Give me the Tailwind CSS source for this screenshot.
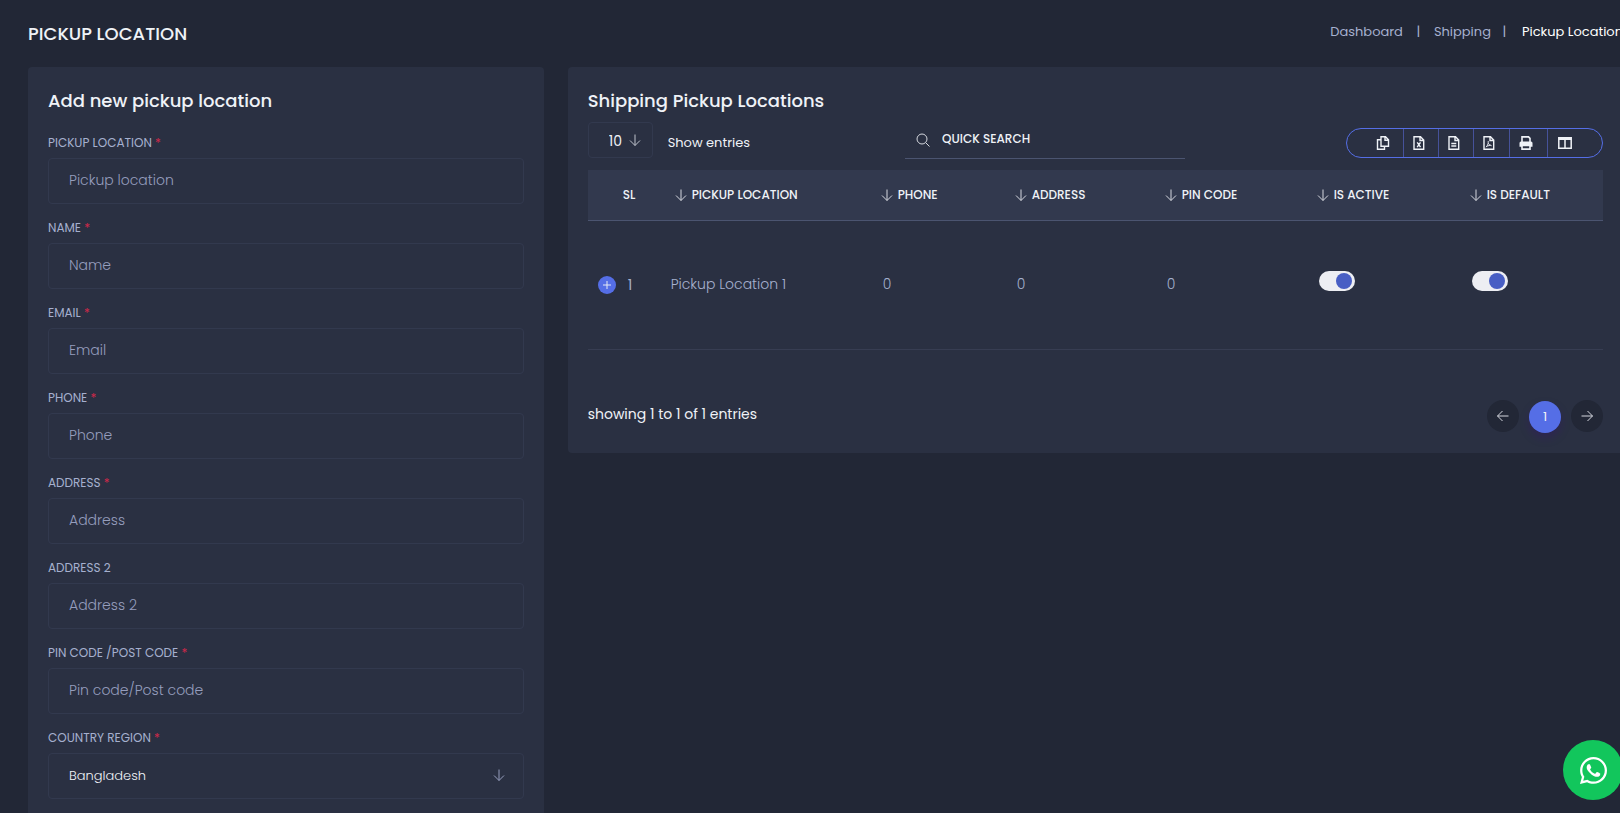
<!DOCTYPE html>
<html lang="en">
  <head>
    <meta charset="UTF-8" />
    <meta name="viewport" content="width=device-width, initial-scale=1.0" />
    <title>Pickup Location</title>
    <script src="https://cdn.jsdelivr.net/npm/@tailwindcss/browser@4"></script>
  </head>
  <body class="h-screen overflow-hidden bg-[#222736] font-['Poppins','Inter',sans-serif] text-[#eff2f7]">
    <!-- Shared icons -->
    <svg class="hidden">
      <symbol id="arrow-down" viewBox="0 0 12 12">
        <path d="M6 .5v11M1 6.5l5 5 5-5" fill="none" stroke="currentColor" />
      </symbol>
    </svg>

    <div class="-mr-[3px] pl-7">
      <!-- Page title -->
      <header class="flex h-[67px] items-start justify-between">
        <h1 class="pt-5 text-lg font-medium">PICKUP LOCATION</h1>
        <nav class="pt-[22px] text-[13px] leading-5 whitespace-nowrap text-[#a6b0cf]">
          <ol class="flex">
            <li><a href="#">Dashboard</a></li>
            <li class="w-[31px] text-center">|</li>
            <li><a href="#">Shipping</a></li>
            <li class="w-[31px] pr-1 text-center">|</li>
            <li class="text-white"><a href="#" aria-current="page">Pickup Location</a></li>
          </ol>
        </nav>
      </header>

      <main class="grid grid-cols-3 items-start gap-6">
        <!-- Add form -->
        <section class="rounded bg-[#2a3042] p-5">
          <h2 class="text-lg leading-7 font-medium">Add new pickup location</h2>
          <form class="mt-[18px] flex flex-col gap-[14px]">
            <div>
              <label for="location" class="block h-[25px] text-xs leading-5 text-[#a6b0cf]">PICKUP LOCATION <span class="text-[#d0284a]">*</span></label>
              <input id="location" type="text" placeholder="Pickup location" class="block h-[46px] w-full rounded border border-[#32394e] px-5 pb-0.5 text-sm font-light placeholder:text-[#959dbd]" />
            </div>
            <div>
              <label for="name" class="block h-[25px] text-xs leading-5 text-[#a6b0cf]">NAME <span class="text-[#d0284a]">*</span></label>
              <input id="name" type="text" placeholder="Name" class="block h-[46px] w-full rounded border border-[#32394e] px-5 pb-0.5 text-sm font-light placeholder:text-[#959dbd]" />
            </div>
            <div>
              <label for="email" class="block h-[25px] text-xs leading-5 text-[#a6b0cf]">EMAIL <span class="text-[#d0284a]">*</span></label>
              <input id="email" type="email" placeholder="Email" class="block h-[46px] w-full rounded border border-[#32394e] px-5 pb-0.5 text-sm font-light placeholder:text-[#959dbd]" />
            </div>
            <div>
              <label for="phone" class="block h-[25px] text-xs leading-5 text-[#a6b0cf]">PHONE <span class="text-[#d0284a]">*</span></label>
              <input id="phone" type="tel" placeholder="Phone" class="block h-[46px] w-full rounded border border-[#32394e] px-5 pb-0.5 text-sm font-light placeholder:text-[#959dbd]" />
            </div>
            <div>
              <label for="address" class="block h-[25px] text-xs leading-5 text-[#a6b0cf]">ADDRESS <span class="text-[#d0284a]">*</span></label>
              <input id="address" type="text" placeholder="Address" class="block h-[46px] w-full rounded border border-[#32394e] px-5 pb-0.5 text-sm font-light placeholder:text-[#959dbd]" />
            </div>
            <div>
              <label for="address2" class="block h-[25px] text-xs leading-5 text-[#a6b0cf]">ADDRESS 2</label>
              <input id="address2" type="text" placeholder="Address 2" class="block h-[46px] w-full rounded border border-[#32394e] px-5 pb-0.5 text-sm font-light placeholder:text-[#959dbd]" />
            </div>
            <div>
              <label for="pin" class="block h-[25px] text-xs leading-5 text-[#a6b0cf]">PIN CODE /POST CODE <span class="text-[#d0284a]">*</span></label>
              <input id="pin" type="text" placeholder="Pin code/Post code" class="block h-[46px] w-full rounded border border-[#32394e] px-5 pb-0.5 text-sm font-light placeholder:text-[#959dbd]" />
            </div>
            <div>
              <label for="country" class="block h-[25px] text-xs leading-5 text-[#a6b0cf]">COUNTRY REGION <span class="text-[#d0284a]">*</span></label>
              <div class="relative">
                <select id="country" class="block h-[46px] w-full appearance-none rounded border border-[#32394e] px-5 text-[13px] font-light">
                  <option>Bangladesh</option>
                </select>
                <svg class="pointer-events-none absolute top-4 right-[19px] size-3 text-[#959dbd]"><use href="#arrow-down" /></svg>
              </div>
            </div>
          </form>
          <div class="h-10"></div>
        </section>

        <!-- Locations list -->
        <section class="col-span-2 rounded bg-[#2a3042] p-5">
          <h2 class="text-lg leading-7 font-medium">Shipping Pickup Locations</h2>

          <div class="mt-[7px] flex h-[37px] items-start justify-between">
            <div class="flex items-center gap-[15px]">
              <div class="relative">
                <select id="entries" class="block h-9 w-[65px] appearance-none rounded border border-[#32394e] pt-0.5 pl-5 text-sm">
                  <option>10</option>
                </select>
                <svg class="pointer-events-none absolute top-3 right-3 size-3 text-[#bfc3cc]"><use href="#arrow-down" /></svg>
              </div>
              <label for="entries" class="pt-1.5 text-[13px]">Show entries</label>
            </div>

            <div class="mr-1.5 flex h-full w-[280px] items-center gap-3 border-b border-[#4b5470] pl-[11px]">
              <svg class="size-[14px] shrink-0" viewBox="0 0 14 14" fill="none" stroke="#d5d8df">
                <circle cx="6" cy="6" r="5" />
                <path d="m9.700 9.700 3.800 3.800" />
              </svg>
              <input type="search" aria-label="Quick search" placeholder="QUICK SEARCH" class="h-7 w-full min-w-0 pb-0.5 text-xs font-medium outline-none placeholder:text-[#eff2f7]" />
            </div>

            <div class="mt-1.5 flex h-[30px] divide-x divide-[#46529a] overflow-hidden rounded-full border border-[#556ee6]">
              <button type="button" aria-label="Copy" class="flex w-[57px] items-center justify-end pr-[13px]">
                <svg class="size-[14px]" viewBox="0 0 14 14" fill="none" stroke="currentColor" stroke-width="1.400">
                  <path d="M5 .8h4.500L12.500 3.800v6.400H5zM9 1v3.200h3.300M4.700 3.700H1.500v9.500h7v-2.700" />
                </svg>
              </button>
              <button type="button" aria-label="Export Excel" class="flex w-[35px] items-center pl-2">
                <svg class="size-[14px]" viewBox="0 0 14 14" fill="none" stroke="currentColor" stroke-width="1.400">
                  <path d="M2 .8h6.500l3.200 3.200v9.200H2zM8 1v3.500h3.500M5.200 6.300l3.300 4.900M8.500 6.300l-3.300 4.900" />
                </svg>
              </button>
              <button type="button" aria-label="Export CSV" class="flex w-[35px] items-center pl-2">
                <svg class="size-[14px]" viewBox="0 0 14 14" fill="none" stroke="currentColor" stroke-width="1.400">
                  <path d="M2 .8h6.500l3.200 3.200v9.200H2zM8 1v3.500h3.500M4.300 7.500h5M4.300 10h5" />
                </svg>
              </button>
              <button type="button" aria-label="Export PDF" class="flex w-9 items-center pl-2">
                <svg class="size-[14px]" viewBox="0 0 14 14" fill="none" stroke="currentColor">
                  <path d="M2 .8h6.500l3.200 3.200v9.200H2zM8 1v3.500h3.500" stroke-width="1.400" />
                  <path d="M6.200 5v2.200Q5.800 9.500 4 11.200M6.200 7.200Q7 9 9.700 9.800M4.700 10.200L8.500 9.200" stroke-width=".9" />
                </svg>
              </button>
              <button type="button" aria-label="Print" class="flex w-[38px] items-center pl-[9px]">
                <svg class="size-[14px]" viewBox="0 0 14 14">
                  <path d="M3 6V.9h6.500L11 2.400V6M3 9.500h8v3.600H3z" fill="none" stroke="currentColor" stroke-width="1.600" />
                  <path d="M2 5.500h10a1.500 1.500 0 0 1 1.500 1.500v3.700H11V9.200H3v1.500H.5V7A1.500 1.500 0 0 1 2 5.500z" fill="currentColor" />
                </svg>
              </button>
              <button type="button" aria-label="Columns" class="flex w-[54px] items-center pl-[10px]">
                <svg class="size-[14px]" viewBox="0 0 14 14" fill="none" stroke="currentColor" stroke-width="1.500">
                  <path d="M.8 1.800h12.400v10.500H.8zM7 4v8" />
                  <path d="M.5 2.500h13" stroke-width="3" />
                </svg>
              </button>
            </div>
          </div>

          <table class="mt-[11px] w-full table-fixed text-left">
            <colgroup>
              <col class="w-[72px]" />
              <col class="w-[212px]" />
              <col class="w-[134px]" />
              <col class="w-[150px]" />
              <col class="w-[152px]" />
              <col class="w-[153px]" />
              <col />
            </colgroup>
            <thead class="border-b border-[#4b5470] bg-[#32394e] text-xs">
              <tr class="h-[50px]">
                <th class="pl-[35px] font-medium">SL</th>
                <th class="pl-[15px] font-medium"><span class="flex items-center gap-[5px]"><svg class="size-3 text-[#d5d8df]"><use href="#arrow-down" /></svg>PICKUP LOCATION</span></th>
                <th class="pl-[9px] font-medium"><span class="flex items-center gap-[5px]"><svg class="size-3 text-[#d5d8df]"><use href="#arrow-down" /></svg>PHONE</span></th>
                <th class="pl-[9px] font-medium"><span class="flex items-center gap-[5px]"><svg class="size-3 text-[#d5d8df]"><use href="#arrow-down" /></svg>ADDRESS</span></th>
                <th class="pl-[9px] font-medium"><span class="flex items-center gap-[5px]"><svg class="size-3 text-[#d5d8df]"><use href="#arrow-down" /></svg>PIN CODE</span></th>
                <th class="pl-[9px] font-medium"><span class="flex items-center gap-[5px]"><svg class="size-3 text-[#d5d8df]"><use href="#arrow-down" /></svg>IS ACTIVE</span></th>
                <th class="pl-[9px] font-medium"><span class="flex items-center gap-[5px]"><svg class="size-3 text-[#d5d8df]"><use href="#arrow-down" /></svg>IS DEFAULT</span></th>
              </tr>
            </thead>
            <tbody class="text-sm font-light text-[#a6b0cf]">
              <tr class="h-[129px] border-b border-[#373d52]">
                <td class="pl-[10px]">
                  <div class="flex items-center gap-3 font-normal">
                    <button type="button" aria-label="Expand row" class="flex size-[18px] items-center justify-center rounded-full bg-[#556ee6]">
                      <svg class="size-2" viewBox="0 0 8 8" stroke="#e6e9f5"><path d="M4 0v8M0 4h8" /></svg>
                    </button>
                    1
                  </div>
                </td>
                <td class="pb-0.5 pl-[11px]">Pickup Location 1</td>
                <td class="pb-0.5 pl-[11px]">0</td>
                <td class="pb-0.5 pl-[11px]">0</td>
                <td class="pb-0.5 pl-[11px]">0</td>
                <td class="pb-2 pl-[11px]">
                  <input type="checkbox" checked aria-label="Is active" class="flex h-5 w-9 appearance-none items-center rounded-full bg-[#edeef3] px-[3px] before:size-4 before:rounded-full before:bg-[#485ec4] checked:justify-end" />
                </td>
                <td class="pb-2 pl-[11px]">
                  <input type="checkbox" checked aria-label="Is default" class="flex h-5 w-9 appearance-none items-center rounded-full bg-[#edeef3] px-[3px] before:size-4 before:rounded-full before:bg-[#485ec4] checked:justify-end" />
                </td>
              </tr>
            </tbody>
          </table>

          <!-- Pagination -->
          <div class="mt-[50px] flex items-start justify-between">
            <p class="pt-1 text-sm">showing 1 to 1 of 1 entries</p>
            <nav class="flex items-center gap-[10px]" aria-label="Pagination">
              <button type="button" aria-label="Previous" class="flex size-8 items-center justify-center rounded-full bg-[#222736]">
                <svg class="size-3 rotate-90 text-[#d5d8df]"><use href="#arrow-down" /></svg>
              </button>
              <button type="button" aria-current="page" class="mt-px size-8 rounded-full bg-[#556ee6] text-[13px] shadow-[0_5px_10px_rgba(59,0,130,0.25)]">1</button>
              <button type="button" aria-label="Next" class="flex size-8 items-center justify-center rounded-full bg-[#222736]">
                <svg class="size-3 -rotate-90 text-[#d5d8df]"><use href="#arrow-down" /></svg>
              </button>
            </nav>
          </div>
        </section>
      </main>
    </div>

    <!-- Chat button -->
    <a href="#" aria-label="WhatsApp" class="fixed -right-[3px] bottom-[13px] flex size-[60px] items-center justify-center rounded-full bg-[#12c65c] text-white">
      <svg class="size-[27px]" viewBox="0 0 448 448" fill="currentColor">
        <path d="M380.900 65.100C339 23.100 283.200 0 223.900 0 101.500 0 1.900 99.600 1.900 222c0 39.100 10.200 77.300 29.600 111L0 448l117.700-30.900c32.400 17.700 68.900 27 106.100 27h.1c122.300 0 224.100-99.600 224.100-222 0-59.300-25.200-115-67.100-157zM223.900 406.700c-33.200 0-65.700-8.900-94-25.700l-6.700-4-69.800 18.300L72 327.200l-4.400-7c-18.500-29.400-28.200-63.300-28.200-98.200 0-101.700 82.800-184.500 184.600-184.500 49.300 0 95.600 19.200 130.400 54.100 34.800 34.900 56.200 81.200 56.100 130.500 0 101.800-84.900 184.600-186.600 184.600zm101.200-138.200c-5.500-2.800-32.800-16.200-37.900-18-5.100-1.900-8.800-2.800-12.500 2.800-3.700 5.600-14.300 18-17.600 21.800-3.200 3.700-6.500 4.200-12 1.400-32.600-16.300-54-29.100-75.500-66-5.700-9.800 5.700-9.100 16.300-30.300 1.800-3.700.9-6.900-.5-9.700-1.400-2.800-12.500-30.100-17.100-41.200-4.500-10.800-9.100-9.300-12.500-9.500-3.200-.2-6.900-.2-10.600-.2-3.700 0-9.700 1.400-14.800 6.900-5.100 5.600-19.400 19-19.400 46.300 0 27.300 19.900 53.700 22.600 57.400 2.800 3.700 39.100 59.700 94.800 83.800 35.200 15.200 49 16.500 66.600 13.900 10.700-1.600 32.800-13.400 37.400-26.400 4.600-13 4.600-24.100 3.200-26.400-1.300-2.500-5-3.900-10.500-6.600z" />
      </svg>
    </a>
  </body>
</html>
